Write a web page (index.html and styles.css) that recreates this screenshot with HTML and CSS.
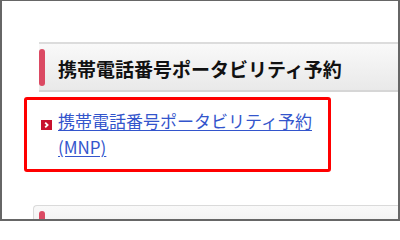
FILE: index.html
```html
<!DOCTYPE html>
<html lang="ja">
<head>
<meta charset="utf-8">
<link rel="stylesheet" href="styles.css">
</head>
<body>
<div class="frame">
  <div class="heading">
    <span class="pill"></span>
    <h2 class="heading-text">携帯電話番号ポータビリティ予約</h2>
  </div>
  <div class="highlight">
    <div class="link-row">
      <span class="arrow">
        <svg width="11" height="10" viewBox="0 0 11 10"><rect width="11" height="10" fill="#c8102e"/><path d="M4.2 2.6 L6.6 5 L4.2 7.4" fill="none" stroke="#fff" stroke-width="1.8"/></svg>
      </span>
      <a class="link" href="#">携帯電話番号ポータビリティ予約 (MNP)</a>
    </div>
  </div>
  <div class="heading heading-next">
    <span class="pill"></span>
  </div>
</div>
</body>
</html>
```
FILE: styles.css
```css
* { box-sizing: border-box; }
html, body { margin: 0; padding: 0; background: #fff; }
body { font-family: "Noto Sans CJK JP", "Noto Sans", sans-serif; }
.frame {
  width: 400px;
  height: 221px;
  border: 2px solid #666;
  border-top-width: 1px;
  overflow: hidden;
  padding-top: 41px;
  background: #fff;
}
.heading {
  height: 50px;
  margin-left: 37px;
  border-top: 2px solid #dcdcdc;
  border-bottom: 2px solid #d6d6d6;
  background: linear-gradient(#f9f9f9, #e9e9e9);
  display: flex;
  align-items: center;
}
.pill {
  width: 6px;
  height: 37px;
  margin-left: 0;
  border-radius: 3px;
  background: #db4a63;
  flex: none;
}
.heading-text {
  margin: 0 0 0 13px;
  font-size: 19px;
  font-weight: bold;
  color: #111;
  line-height: 1;
  padding-top: 3px;
  letter-spacing: 0;
}
.highlight {
  margin: 5px 0 0 22px;
  width: 307px;
  height: 75px;
  border: 3px solid #ff0000;
  border-radius: 3px;
  padding: 8px 0 0 14px;
}
.link-row {
  display: flex;
  align-items: flex-start;
}
.arrow {
  flex: none;
  margin-top: 12px;
  width: 11px;
  height: 10px;
  display: block;
}
.arrow svg { display: block; }
.link {
  margin-left: 6px;
  font-size: 17px;
  line-height: 26px;
  color: #3355cc;
  text-decoration: underline;
  text-underline-offset: 2px;
  width: 266px;
}
.heading-next {
  margin: 33px 0 0 31px;
  border: 1px solid #dadada;
  border-right: none;
  border-radius: 4px 0 0 0;
  height: 40px;
  align-items: flex-start;
  padding-left: 5px;
  padding-top: 5px;
}
```
